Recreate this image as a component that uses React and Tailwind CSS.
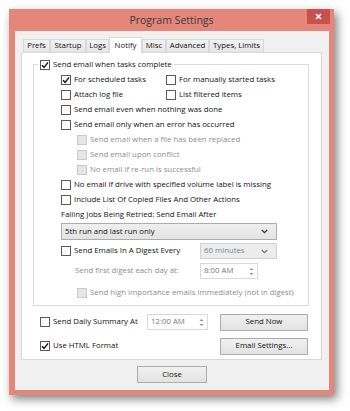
import React from "react";

const Check = ({ checked, disabled }) => (
  <span
    className={`w-[10px] h-[10px] shrink-0 border flex items-center justify-center ${
      disabled ? "border-[#c9c9c9] bg-[#e6e6e6]" : "border-[#5a5a5a] bg-white"
    }`}
  >
    {checked && (
      <svg width="8" height="8" viewBox="0 0 8 8">
        <path d="M1 4.3 L3.1 6.4 L7 1.4" fill="none" stroke="#1a1a1a" strokeWidth="1.5" />
      </svg>
    )}
  </span>
);

const Opt = ({ label, checked, disabled, className = "" }) => (
  <div className={`flex items-center gap-[3px] ${className}`}>
    <Check checked={checked} disabled={disabled} />
    <span className={`whitespace-nowrap ${disabled ? "text-[#8d8d8d]" : "text-[#111]"}`}>{label}</span>
  </div>
);

const Chevron = ({ color = "#3c3c3c" }) => (
  <svg width="7" height="5" viewBox="0 0 7 5">
    <path d="M0.8 1 L3.5 3.7 L6.2 1" fill="none" stroke={color} strokeWidth="1.3" />
  </svg>
);

const Select = ({ value, disabled, className = "" }) => (
  <div
    className={`flex items-center justify-between border pl-[3px] pr-[8px] ${
      disabled
        ? "border-[#d2d2d2] bg-[#ececec] text-[#7d8794]"
        : "border-[#acacac] bg-gradient-to-b from-[#efefef] to-[#e3e3e3] text-[#111]"
    } ${className}`}
  >
    <span className="whitespace-nowrap">{value}</span>
    <Chevron color={disabled ? "#7a7a7a" : "#3c3c3c"} />
  </div>
);

const TimeBox = ({ value, className = "" }) => (
  <div className={`flex items-center justify-between border border-[#d9d9d9] bg-white pl-[3px] pr-[2px] text-[#7a7a7a] ${className}`}>
    <span className="whitespace-nowrap">{value}</span>
    <svg width="7" height="11" viewBox="0 0 7 11">
      <path d="M1.5 4 L3.5 2 L5.5 4 Z" fill="#8a8a8a" />
      <path d="M1.5 7 L3.5 9 L5.5 7 Z" fill="#8a8a8a" />
    </svg>
  </div>
);

const Btn = ({ label, className = "" }) => (
  <div
    className={`flex items-center justify-center border border-[#adadad] bg-gradient-to-b from-[#f0f0f0] to-[#e3e3e3] text-[#111] ${className}`}
  >
    {label}
  </div>
);

const tabs = [
  { name: "Prefs", w: "w-[27px]" },
  { name: "Startup", w: "w-[36px]" },
  { name: "Logs", w: "w-[23px]" },
  { name: "Notify", w: "w-[33px]", active: true },
  { name: "Misc", w: "w-[24px]" },
  { name: "Advanced", w: "w-[43px]" },
  { name: "Types, Limits", w: "w-[55px]" },
];

export default function App() {
  return (
    <div className="w-[350px] h-[411px] bg-white overflow-hidden pt-[9px] pl-[9px] font-['Open_Sans',sans-serif] text-[7.8px] leading-none text-[#111]">
      <div className="w-[325px] h-[386px] bg-[#e5867b] flex flex-col shadow-[3px_4px_9px_rgba(0,0,0,0.5)]">
        {/* title bar */}
        <div className="relative h-[22px] shrink-0 flex items-center justify-center pt-[1px]">
          <span className="text-[10.5px] text-[#3a3a3a]">Program Settings</span>
          <div className="absolute right-[4px] top-0 w-[23px] h-[15px] bg-[#c9504c] flex items-center justify-center">
            <svg width="7" height="7" viewBox="0 0 7 7">
              <path d="M1 1 L6 6 M6 1 L1 6" stroke="#fff" strokeWidth="1.6" />
            </svg>
          </div>
        </div>

        {/* client */}
        <div className="ml-[6px] mr-[5px] mb-[5px] flex-1 bg-[#f0f0f0] flex flex-col">
          {/* tabs */}
          <div className="h-[21px] shrink-0 flex items-end pl-[8px]">
            {tabs.map((t) =>
              t.active ? (
                <div
                  key={t.name}
                  className={`${t.w} h-[16px] -mb-px relative z-10 bg-white border border-b-0 border-[#d9d9d9] flex items-center justify-center whitespace-nowrap`}
                >
                  {t.name}
                </div>
              ) : (
                <div
                  key={t.name}
                  className={`${t.w} h-[13px] bg-gradient-to-b from-[#f2f2f2] to-[#e6e6e6] border border-b-0 border-[#d9d9d9] flex items-center justify-center whitespace-nowrap`}
                >
                  {t.name}
                </div>
              )
            )}
          </div>

          {/* panel */}
          <div className="ml-[6px] mr-[7px] h-[308px] shrink-0 border border-[#d9d9d9] bg-white flex flex-col">
            {/* group box */}
            <div className="ml-[11px] mt-[11px] w-[276px] border border-[#dcdcdc] pb-[5px] flex flex-col">
              <div className="-mt-[8px] h-[15px] ml-[4px] px-[2px] w-fit bg-white flex items-center">
                <Opt label="Send email when tasks complete" checked />
              </div>
              <div className="h-[15px] pl-[27px] flex items-center">
                <Opt label="For scheduled tasks" checked className="w-[105px]" />
                <Opt label="For manually started tasks" />
              </div>
              <div className="h-[15px] pl-[27px] flex items-center">
                <Opt label="Attach log file" className="w-[105px]" />
                <Opt label="List filtered items" />
              </div>
              <Opt label="Send email even when nothing was done" className="h-[15px] pl-[27px]" />
              <Opt label="Send email only when an error has occurred" className="h-[15px] pl-[27px]" />
              <Opt label="Send email when a file has been replaced" disabled className="h-[15px] pl-[43px]" />
              <Opt label="Send email upon conflict" disabled className="h-[15px] pl-[43px]" />
              <Opt label="No email if re-run is successful" disabled className="h-[15px] pl-[43px]" />
              <Opt label="No email if drive with specified volume label is missing" className="h-[15px] pl-[27px]" />
              <Opt label="Include List Of Copied Files And Other Actions" className="h-[15px] pl-[27px]" />
              <div className="h-[15px] pl-[27px] flex items-center">Failing Jobs Being Retried: Send Email After</div>
              <Select value="5th run and last run only" className="ml-[27px] mt-[1px] w-[216px] h-[17px]" />
              <div className="mt-[3px] h-[16px] pl-[27px] flex items-center">
                <Opt label="Send Emails In A Digest Every" className="w-[139px]" />
                <Select value="60 minutes" disabled className="w-[77px] h-[16px]" />
              </div>
              <div className="mt-[4px] h-[16px] pl-[41px] flex items-center">
                <span className="w-[125px] text-[#8d8d8d] whitespace-nowrap">Send first digest each day at:</span>
                <TimeBox value="8:00 AM" className="w-[58px] h-[16px]" />
              </div>
              <Opt
                label="Send high importance emails immediately (not in digest)"
                disabled
                className="mt-[6px] h-[15px] pl-[43px]"
              />
            </div>

            <div className="mt-[8px] h-[16px] pl-[18px] flex items-center">
              <Opt label="Send Daily Summary At" className="w-[107px]" />
              <TimeBox value="12:00 AM" className="w-[61px] h-[16px]" />
              <Btn label="Send Now" className="ml-[12px] w-[88px] h-[17px]" />
            </div>
            <div className="mt-[8px] h-[16px] pl-[18px] flex items-center">
              <Opt label="Use HTML Format" checked className="w-[180px]" />
              <Btn label="Email Settings..." className="w-[88px] h-[17px]" />
            </div>
          </div>

          {/* bottom */}
          <div className="mt-[6px] flex justify-center">
            <Btn label="Close" className="w-[70px] h-[17px]" />
          </div>
        </div>
      </div>
    </div>
  );
}
